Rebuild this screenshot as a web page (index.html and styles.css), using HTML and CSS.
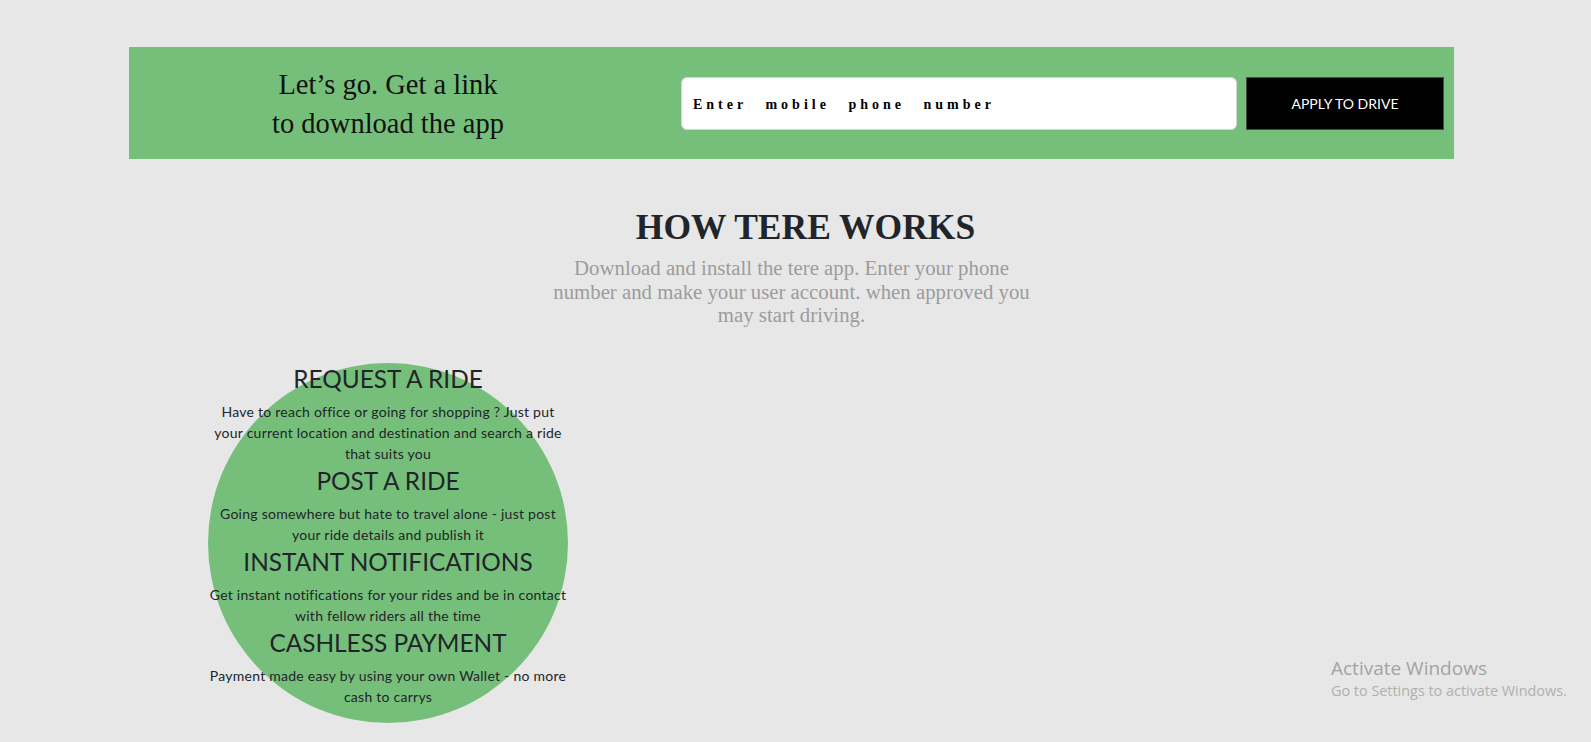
FILE: index.html
```html
<!DOCTYPE html>
<html lang="en">
<head>
<meta charset="utf-8">
<title>Tere</title>
<link rel="stylesheet" href="styles.css">
</head>
<body>
<div class="wrap">
  <section class="banner">
    <div class="banner-text">Let’s go. Get a link<br>to download the app</div>
    <input class="phone" type="text" placeholder="Enter mobile phone number">
    <button class="apply">APPLY TO DRIVE</button>
  </section>

  <section class="how">
    <h1 class="how-title">HOW TERE WORKS</h1>
    <p class="how-sub">Download and install the tere app. Enter your phone number and make your user account. when approved you may start driving.</p>
  </section>

  <section class="features">
    <div class="circle">
      <h3>REQUEST A RIDE</h3>
      <p>Have to reach office or going for shopping ? Just put your current location and destination and search a ride that suits you</p>
      <h3>POST A RIDE</h3>
      <p>Going somewhere but hate to travel alone - just post your ride details and publish it</p>
      <h3>INSTANT NOTIFICATIONS</h3>
      <p>Get instant notifications for your rides and be in contact with fellow riders all the time</p>
      <h3>CASHLESS PAYMENT</h3>
      <p>Payment made easy by using your own Wallet - no more cash to carrys</p>
    </div>
  </section>
</div>

<div class="activate">
  <div class="act-title">Activate Windows</div>
  <div class="act-sub">Go to Settings to activate Windows.</div>
</div>
</body>
</html>
```
FILE: styles.css
```css
html, body {
  margin: 0;
  padding: 0;
}
body {
  background: #e7e7e7;
  color: #212529;
  font-family: Lato, "Open Sans", sans-serif;
  height: 742px;
  overflow: hidden;
}
.wrap {
  margin: 0 137px 0 129px;
  padding-top: 47px;
}
.banner {
  background: #76bf7b;
  height: 112px;
  display: flex;
  align-items: center;
  padding-right: 10px;
  box-sizing: border-box;
}
.banner-text {
  width: 518px;
  flex: none;
  text-align: center;
  font-family: "Liberation Serif", serif;
  font-size: 28.5px;
  line-height: 39px;
  color: #111;
  margin-top: 1px;
}
.phone {
  margin-left: 34px;
  width: 556px;
  height: 53px;
  box-sizing: border-box;
  flex: none;
  border: 1px solid #d6d6d6;
  border-radius: 6px;
  background: #fff;
  padding: 3px 11px 0;
  font-family: "Liberation Serif", serif;
  font-weight: bold;
  font-size: 14px;
  letter-spacing: 4px;
  word-spacing: 11px;
  color: #000;
  outline: none;
}
.phone::placeholder {
  color: #000;
  opacity: 1;
}
.apply {
  margin-left: 9px;
  width: 198px;
  height: 53px;
  flex: none;
  background: #000;
  color: #fff;
  border: 1px solid #4a4a4a;
  font-family: Lato, "Open Sans", sans-serif;
  font-size: 14px;
  padding: 0;
}
.how {
  text-align: center;
}
.how-title {
  margin: 47px 0 0;
  padding-left: 28px;
  font-family: "Liberation Serif", serif;
  font-weight: bold;
  font-size: 35.5px;
  line-height: 43px;
  color: #212529;
}
.how-sub {
  width: 490px;
  margin: 7px auto 0;
  font-family: "Liberation Serif", serif;
  font-size: 20.8px;
  line-height: 23.5px;
  color: #9c9c9c;
}
.features {
  margin-top: 36px;
  padding-left: 79px;
}
.circle {
  width: 360px;
  height: 360px;
  border-radius: 50%;
  background: #76bf7b;
  text-align: center;
  padding-top: 1px;
  box-sizing: border-box;
}
.circle h3 {
  margin: 0 0 7px;
  font-size: 24.4px;
  line-height: 30px;
  font-weight: 400;
  color: #212529;
}
.circle p {
  margin: 0 0 2px;
  font-size: 14px;
  line-height: 21px;
  letter-spacing: 0.25px;
  color: #212529;
}
.activate {
  position: absolute;
  left: 1331px;
  top: 656px;
  color: #a3a3a3;
  font-family: "Open Sans", sans-serif;
}
.act-title {
  font-size: 19px;
  line-height: 25px;
}
.act-sub {
  font-size: 14.4px;
  line-height: 20px;
  color: #b0b0b0;
}
```
